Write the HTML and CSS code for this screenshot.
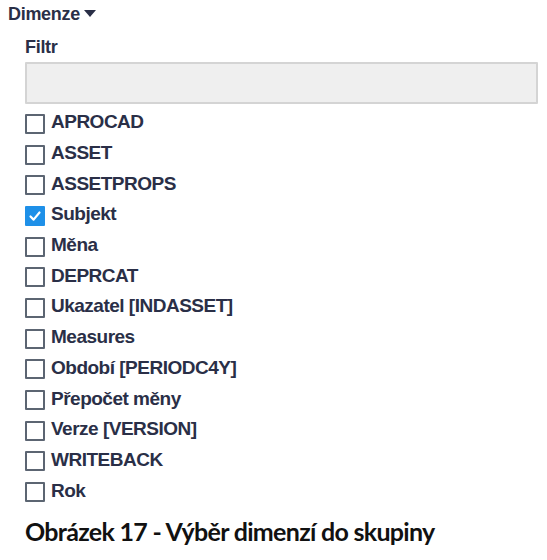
FILE: index.html
```html
<!DOCTYPE html>
<html lang="cs">

<head>
    <meta charset="UTF-8">
    <meta name="viewport" content="width=device-width, initial-scale=1.0">
    <title>Dimenze</title>
    <link rel="stylesheet" href="styles.css">
</head>

<body>
    <div class="panel">
        <div class="panel-title">Dimenze <span class="caret"></span></div>
        <div class="filter">
            <label for="filtr">Filtr</label>
            <input type="text" id="filtr">
        </div>
        <ul class="dims">
            <li><span class="box"></span>APROCAD</li>
            <li><span class="box"></span>ASSET</li>
            <li><span class="box"></span>ASSETPROPS</li>
            <li><span class="box checked"><svg viewBox="0 0 20 20" width="20" height="20"><path d="M5.5 10.5 L8.6 13.6 L14.5 6.5" fill="none" stroke="#fff" stroke-width="2.2" stroke-linecap="round" stroke-linejoin="round"/></svg></span>Subjekt</li>
            <li><span class="box"></span>Měna</li>
            <li><span class="box"></span>DEPRCAT</li>
            <li><span class="box"></span>Ukazatel [INDASSET]</li>
            <li><span class="box"></span>Measures</li>
            <li><span class="box"></span>Období [PERIODC4Y]</li>
            <li><span class="box"></span>Přepočet měny</li>
            <li><span class="box"></span>Verze [VERSION]</li>
            <li><span class="box"></span>WRITEBACK</li>
            <li><span class="box"></span>Rok</li>
        </ul>
    </div>
    <p class="caption">Obrázek 17 - Výběr dimenzí do skupiny</p>
</body>

</html>
```

FILE: styles.css
```css
body {
    margin: 0;
    background: #fff;
    font-family: "Liberation Sans", Arial, sans-serif;
    color: #2a2f47;
}

.panel {
    padding: 3px 9px 0 8px;
}

.panel-title {
    font-size: 18px;
    font-weight: bold;
    line-height: 22px;
    letter-spacing: -0.3px;
}

.caret {
    display: inline-block;
    width: 0;
    height: 0;
    margin-left: -1px;
    vertical-align: 3px;
    border-left: 6px solid transparent;
    border-right: 6px solid transparent;
    border-top: 7px solid #2a2f47;
}

.filter {
    padding-left: 17px;
    margin-top: 12px;
}

.filter label {
    display: block;
    font-size: 18px;
    font-weight: bold;
    line-height: 21px;
    letter-spacing: -0.3px;
}

.filter input {
    display: block;
    box-sizing: border-box;
    width: 100%;
    height: 42px;
    margin-top: 4px;
    background: #efefef;
    border: 2px solid #d4d4d4;
    border-radius: 1px;
}

.dims {
    list-style: none;
    margin: 3px 0 0 0;
    padding: 0 0 0 17px;
}

.dims li {
    display: flex;
    align-items: center;
    height: 30.7px;
    font-size: 19px;
    font-weight: bold;
    letter-spacing: -0.5px;
}

.box {
    box-sizing: border-box;
    width: 20px;
    height: 20px;
    margin: 3px 6px 0 0;
    border: 2px solid #5c6572;
    border-radius: 1px;
    flex: none;
}

.box.checked {
    border: none;
    background: #1e90e8;
}

.box svg {
    display: block;
}

.caption {
    margin: 10px 0 0 25px;
    font-family: Lato, sans-serif;
    font-size: 25px;
    font-weight: bold;
    color: #111;
    letter-spacing: -0.7px;
}
```
